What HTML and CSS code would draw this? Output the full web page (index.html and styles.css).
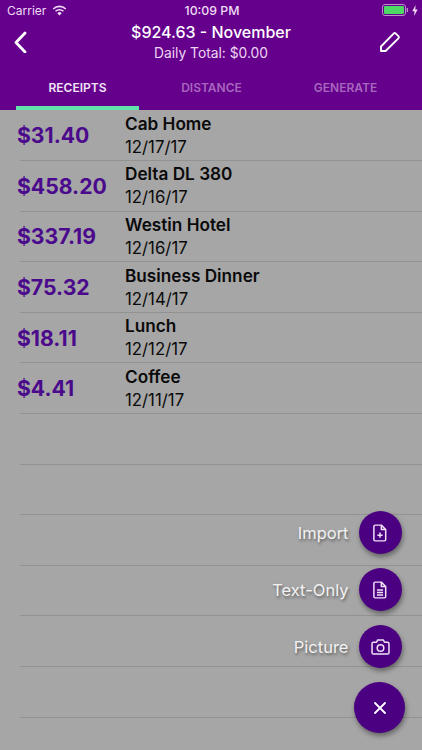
FILE: index.html
```html
<!DOCTYPE html>
<html lang="en">
<head>
<meta charset="utf-8">
<title>Receipts</title>
<link rel="stylesheet" href="styles.css">
</head>
<body>
<div class="app">
  <header class="header">
    <div class="status">
      <div class="status-left">
        <span>Carrier</span>
        <svg class="wifi" viewBox="0 0 16 12"><path d="M8 11.500 5.600 8.900a3.400 3.400 0 0 1 4.800 0z" fill="#f0dcf5"/><path d="M3.700 6.900a6 6 0 0 1 8.600 0M1.200 4.300a9.600 9.600 0 0 1 13.600 0" fill="none" stroke="#f0dcf5" stroke-width="1.700"/></svg>
      </div>
      <div class="status-time">10:09 PM</div>
      <div class="status-right">
        <svg class="battery" viewBox="0 0 27 12"><rect x=".5" y=".5" width="23" height="11" rx="2.500" fill="none" stroke="#b98bc9"/><rect x="2" y="2" width="20" height="8" rx="1.200" fill="#4cd964"/><rect x="24.600" y="4" width="1.400" height="4" fill="#b98bc9"/></svg>
        <svg class="bolt" viewBox="0 0 6 11"><path d="M3.600 0 .3 6.200h2.200L2 11l3.700-6.600H3.300z" fill="#f0dcf5"/></svg>
      </div>
    </div>
    <div class="nav">
      <svg class="back" viewBox="0 0 14 22"><path d="M12 2 3 11.500l9 9.500" fill="none" stroke="#fff" stroke-width="2.800" stroke-linecap="round" stroke-linejoin="round"/></svg>
      <div class="titles">
        <div class="title">$924.63 - November</div>
        <div class="subtitle">Daily Total: $0.00</div>
      </div>
      <svg class="edit" viewBox="0 0 22 22"><path d="M2 15.500 14.600 2.600a1.600 1.600 0 0 1 2.200 0l2.600 2.500a1.600 1.600 0 0 1 0 2.200L6.600 20H2z" fill="none" stroke="#fff" stroke-width="1.900" stroke-linejoin="round"/></svg>
    </div>
    <nav class="tabs">
      <div class="tab tab-active">RECEIPTS</div>
      <div class="tab">DISTANCE</div>
      <div class="tab">GENERATE</div>
    </nav>
  </header>

  <main class="list">
    <div class="row"><div class="amount">$31.40</div><div class="info"><div class="name">Cab Home</div><div class="date">12/17/17</div></div></div>
    <div class="row"><div class="amount">$458.20</div><div class="info"><div class="name">Delta DL 380</div><div class="date">12/16/17</div></div></div>
    <div class="row"><div class="amount">$337.19</div><div class="info"><div class="name">Westin Hotel</div><div class="date">12/16/17</div></div></div>
    <div class="row"><div class="amount">$75.32</div><div class="info"><div class="name">Business Dinner</div><div class="date">12/14/17</div></div></div>
    <div class="row"><div class="amount">$18.11</div><div class="info"><div class="name">Lunch</div><div class="date">12/12/17</div></div></div>
    <div class="row"><div class="amount">$4.41</div><div class="info"><div class="name">Coffee</div><div class="date">12/11/17</div></div></div>
    <div class="row"></div>
    <div class="row"></div>
    <div class="row"></div>
    <div class="row"></div>
    <div class="row"></div>
    <div class="row"></div>
  </main>

  <div class="fabs">
    <div class="fab-row">
      <span class="fab-label">Import</span>
      <div class="fab"><svg class="fab-icon" viewBox="0 0 16 20"><path d="M2.500 1h7L14.500 6v11.500a1.500 1.500 0 0 1-1.500 1.500H2.500A1.500 1.500 0 0 1 1 17.500v-15A1.500 1.500 0 0 1 2.500 1zM9.500 1v5h5M8 9.500v6M5 12.500h6" fill="none" stroke="#f0e0f8" stroke-width="1.700" stroke-linejoin="round"/></svg></div>
    </div>
    <div class="fab-row">
      <span class="fab-label">Text-Only</span>
      <div class="fab"><svg class="fab-icon" viewBox="0 0 16 20"><path d="M2.500 1h7L14.500 6v11.500a1.500 1.500 0 0 1-1.500 1.500H2.500A1.500 1.500 0 0 1 1 17.500v-15A1.500 1.500 0 0 1 2.500 1zM9.500 1v5h5M4.500 10h7M4.500 12.800h7M4.500 15.600h7" fill="none" stroke="#f0e0f8" stroke-width="1.700" stroke-linejoin="round"/></svg></div>
    </div>
    <div class="fab-row">
      <span class="fab-label">Picture</span>
      <div class="fab"><svg class="fab-icon-wide" viewBox="0 0 20 17"><path d="M2.500 3.500h3.300L7 1h6l1.200 2.500h3.300A1.500 1.500 0 0 1 19 5v9.500a1.500 1.500 0 0 1-1.500 1.500h-15A1.500 1.500 0 0 1 1 14.500V5a1.500 1.500 0 0 1 1.500-1.500z" fill="none" stroke="#f0e0f8" stroke-width="1.600" stroke-linejoin="round"/><circle cx="10" cy="9.500" r="3.500" fill="none" stroke="#f0e0f8" stroke-width="1.600"/></svg></div>
    </div>
    <div class="fab fab-main"><svg class="fab-close" viewBox="0 0 12 12"><path d="M1 1l10 10M11 1 1 11" fill="none" stroke="#fff" stroke-width="1.800" stroke-linecap="round"/></svg></div>
  </div>
</div>
</body>
</html>
```
FILE: styles.css
```css
* { box-sizing: border-box; }
html, body { margin: 0; padding: 0; }
body { width: 422px; height: 750px; overflow: hidden; font-family: Inter, "Liberation Sans", sans-serif; background: #a6a6a6; }
.app { position: relative; width: 422px; height: 750px; overflow: hidden; }

.header { height: 110px; background: #65008c; display: flex; flex-direction: column; }
.status { height: 21px; display: flex; align-items: center; justify-content: space-between; padding: 0 4px 0 7px; color: #f0dcf5; font-size: 12px; position: relative; }
.status-left { display: flex; align-items: center; gap: 6px; font-size: 12px; }
.wifi { width: 15px; height: 11px; }
.status-time { position: absolute; left: 2px; right: 0; text-align: center; font-size: 12.300px; font-weight: 500; }
.status-right { display: flex; align-items: center; gap: 3px; }
.battery { width: 27px; height: 12px; }
.bolt { width: 6px; height: 11px; }

.nav { height: 49px; display: grid; grid-template-columns: 1fr auto 1fr; align-items: center; padding: 0 13px 7px 13px; }
.back { width: 14px; height: 22px; }
.edit { width: 22px; height: 22px; justify-self: end; margin-right: 8px; }
.titles { text-align: center; color: #fff; }
.title { font-size: 16px; font-weight: 500; line-height: 24px; }
.subtitle { font-size: 13.800px; line-height: 19px; color: #ecd5f3; }

.tabs { flex: 1; display: flex; padding: 0 16px; gap: 11px; }
.tab { width: 123px; flex: none; text-align: center; font-size: 12px; font-weight: 600; line-height: 37px; color: #a866bf; }
.tab-active { color: #f0e4f5; border-bottom: 4px solid #5fe3a8; }

.list { display: flex; flex-direction: column; padding: .5px 0 0 20px; }
.row { height: 50.600px; flex: none; display: flex; align-items: center; border-bottom: 1px solid #929292; }
.amount { width: 108px; margin-left: -3px; font-size: 21.200px; font-weight: 700; color: #4b0a8c; }
.info { display: flex; flex-direction: column; margin-top: -1px; }
.name { font-size: 17.200px; font-weight: 600; line-height: 25px; color: #0a0a0a; }
.date { font-size: 16.800px; line-height: 23px; color: #0a0a0a; }

.fabs { position: absolute; right: 17px; top: 511px; width: 200px; display: flex; flex-direction: column; align-items: flex-end; }
.fab-row { display: flex; align-items: center; gap: 10px; margin-right: 3.500px; margin-bottom: 14px; }
.fab-label { color: #f2f2f2; font-size: 16.500px; text-shadow: 1px 2px 3px rgba(0,0,0,.45); }
.fab { width: 43px; height: 43px; border-radius: 50%; background: #4b0082; box-shadow: 1px 3px 5px rgba(0,0,0,.4); display: flex; align-items: center; justify-content: center; }
.fab-icon { width: 14px; height: 18px; }
.fab-icon-wide { width: 19px; height: 16px; }
.fab-main { width: 51px; height: 51px; }
.fab-close { width: 12px; height: 12px; }
```
